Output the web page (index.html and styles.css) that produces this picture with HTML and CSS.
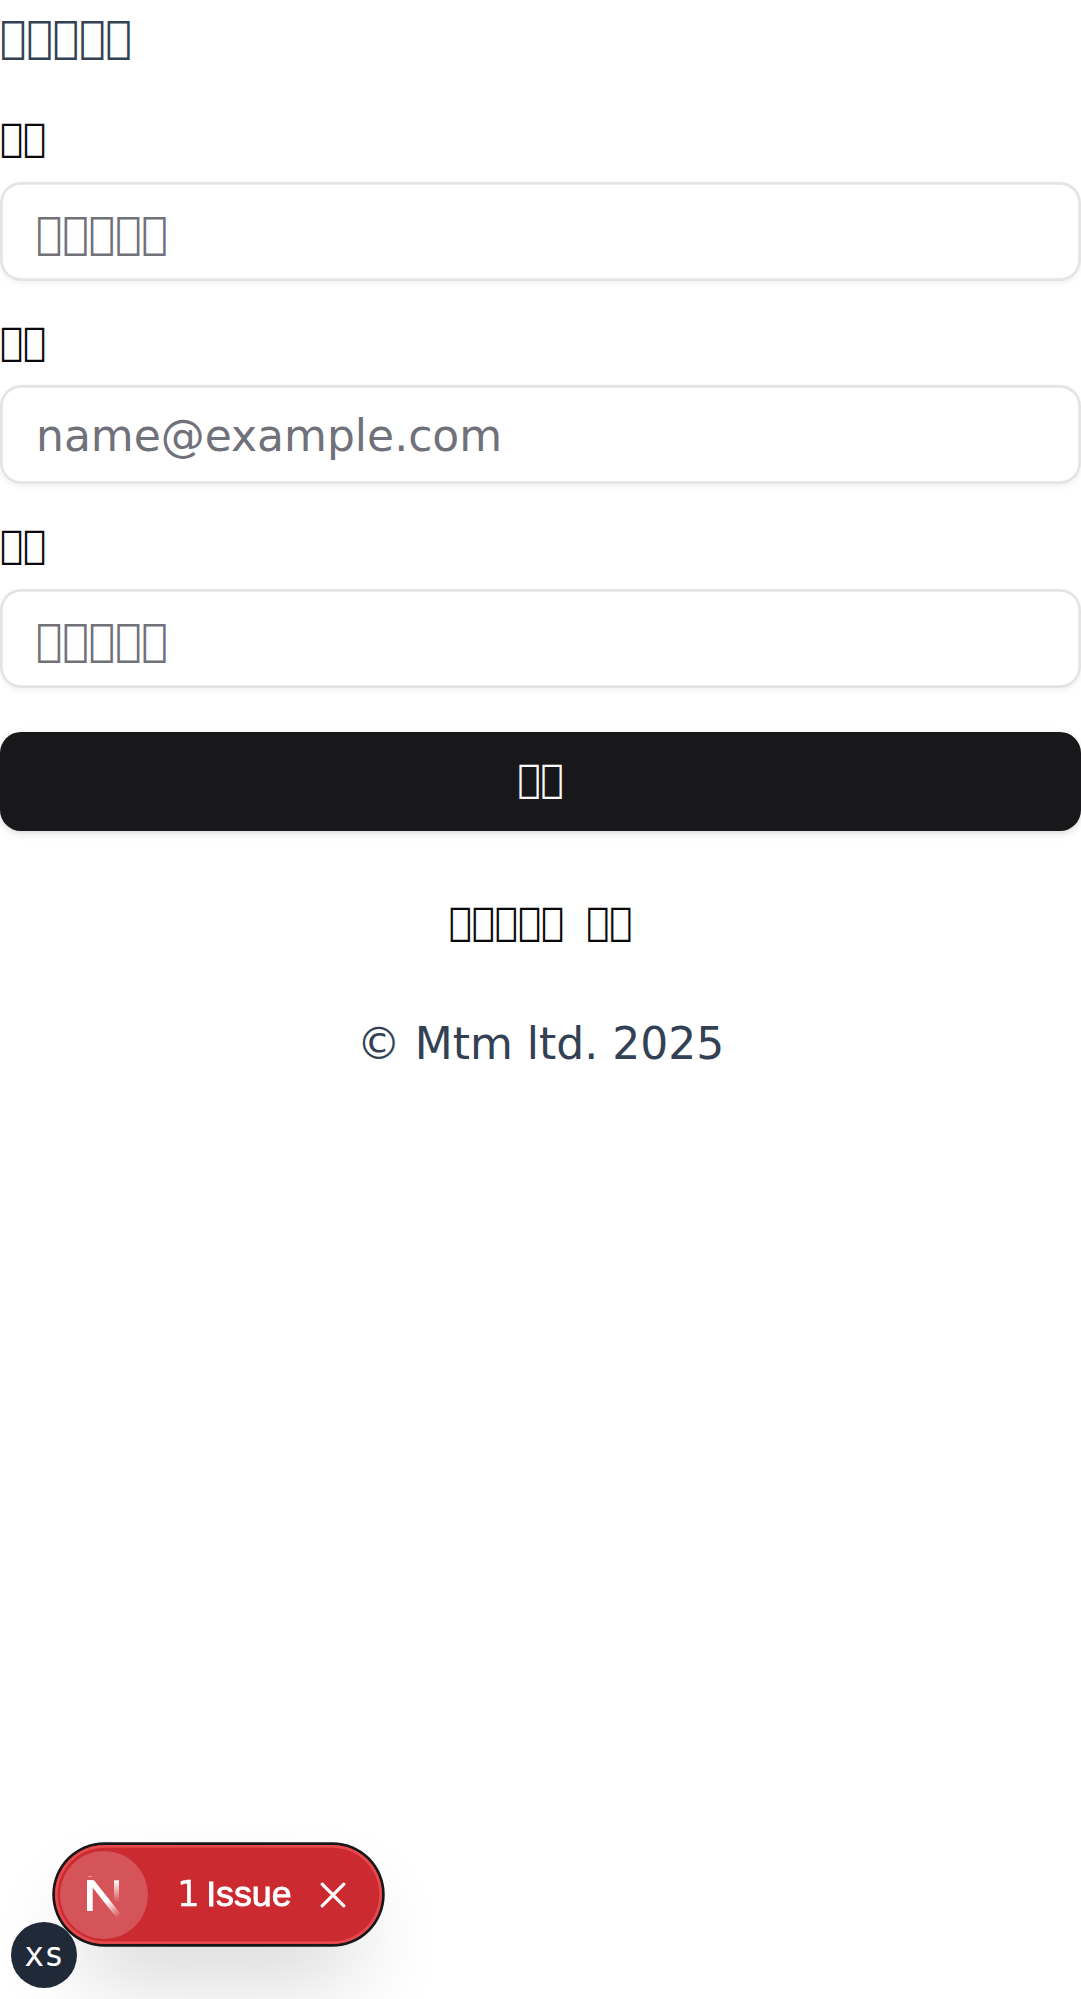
FILE: index.html
```html
<!DOCTYPE html>
<html lang="zh">
<head>
<meta charset="utf-8">
<title>Mtm</title>
<link rel="stylesheet" href="styles.css">
</head>
<body>
<main class="page">
  <p class="title">&#xEFF1;&#xEFF1;&#xEFF1;&#xEFF1;&#xEFF1;</p>
  <form class="form">
    <div class="field">
      <label class="label" for="name">&#xEFF1;&#xEFF1;</label>
      <input class="input" id="name" type="text" placeholder="&#xEFF1;&#xEFF1;&#xEFF1;&#xEFF1;&#xEFF1;">
    </div>
    <div class="field">
      <label class="label" for="email">&#xEFF1;&#xEFF1;</label>
      <input class="input" id="email" type="email" placeholder="name@example.com">
    </div>
    <div class="field">
      <label class="label" for="password">&#xEFF1;&#xEFF1;</label>
      <input class="input" id="password" type="password" placeholder="&#xEFF1;&#xEFF1;&#xEFF1;&#xEFF1;&#xEFF1;">
    </div>
    <button class="submit" type="button">&#xEFF1;&#xEFF1;</button>
  </form>
  <p class="login"><span>&#xEFF1;&#xEFF1;&#xEFF1;&#xEFF1;&#xEFF1;</span><a class="login-link">&#xEFF1;&#xEFF1;</a></p>
  <footer class="footer">© Mtm ltd. 2025</footer>
</main>
<div class="issues">
  <span class="issues-logo">
    <svg width="88" height="88" viewBox="0 0 88 88" fill="none">
      <defs>
        <linearGradient id="diag" x1="49" y1="49" x2="60" y2="65" gradientUnits="userSpaceOnUse"><stop stop-color="#fff"/><stop offset="1" stop-color="#fff" stop-opacity="0"/></linearGradient>
        <linearGradient id="stem" x1="56" y1="29" x2="56" y2="51" gradientUnits="userSpaceOnUse"><stop stop-color="#fff"/><stop offset="1" stop-color="#fff" stop-opacity="0"/></linearGradient>
      </defs>
      <path d="M28 25h4v1h-4z" fill="#fff" opacity=".35"/>
      <path d="M27 29.300h5.700V60H27z" fill="#fff"/>
      <path d="M27 29.300h7L61.500 64l-4.500 3.500z" fill="url(#diag)"/>
      <path d="M54 29.300h5v22h-5z" fill="url(#stem)"/>
    </svg>
  </span>
  <span class="issues-text"><span class="issues-count">1</span> Issue</span>
  <svg class="issues-close" width="26" height="26" viewBox="0 0 26 26" fill="none" stroke="#fff" stroke-width="3.200" stroke-linecap="round"><path d="M2.200 2.200l21.600 21.600M23.800 2.200L2.200 23.800"/></svg>
</div>
<div class="breakpoint">xs</div>
</body>
</html>
```

FILE: styles.css
```css
* { box-sizing: border-box; }
body {
  margin: 0;
  min-height: 1999px;
  background: #fff;
  color: #09090b;
  font: 44px/77px "DejaVu Sans", sans-serif;
}
.title { margin: 0 0 46px; line-height: 73px; padding-bottom: 2px; color: #334155; }
.form { display: flex; flex-direction: column; gap: 44px; }
.field { display: flex; flex-direction: column; gap: 22px; }
.label { padding-bottom: 4px; font-size: 38.5px; line-height: 34.5px; }
.input {
  width: 100%;
  height: 99px;
  margin: 0;
  padding: 13px 35px 11px 36px;
  border: 0;
  border-radius: 21px;
  background: transparent;
  box-shadow: inset 0 0 0 2.75px #e4e4e7, 0 2.75px 5.5px rgba(0, 0, 0, .05);
  font: 44px/66px "DejaVu Sans", sans-serif;
}
.input::placeholder { color: #71717a; opacity: 1; }
.submit {
  height: 99px;
  padding: 0 0 5px;
  border: 0;
  border-radius: 21px;
  background: #18181b;
  box-shadow: 0 2.75px 8.25px rgba(0, 0, 0, .1), 0 2.75px 5.5px -2.75px rgba(0, 0, 0, .1);
  color: #fafafa;
  font: 38.5px/55px "DejaVu Sans", sans-serif;
}
.login {
  display: flex;
  justify-content: center;
  gap: 22px;
  margin: 63.5px 0 55.5px;
  font-size: 38.5px;
  line-height: 55px;
}
.footer { text-align: center; color: #334155; }
.issues {
  position: fixed;
  left: 55px;
  bottom: 55px;
  display: flex;
  align-items: center;
  width: 327px;
  height: 99px;
  padding-left: 5px;
  border-radius: 50px;
  background: #ca2a30;
  color: #fff;
  box-shadow: 0 0 0 2.75px #171717, inset 0 0 0 2.75px #e5484d, 0 44px 88px -22px rgba(0, 0, 0, .24);
}
.issues-logo {
  width: 88px;
  height: 88px;
  border-radius: 50%;
  background: rgba(255, 255, 255, .2);
}
.issues-logo svg { display: block; }
.issues-text {
  width: 143px;
  margin: 0 0 1px 29px;
  white-space: nowrap;
  word-spacing: -3.5px;
  font: 35.75px/36px "Liberation Sans", sans-serif;
  -webkit-text-stroke: .9px #fff;
}
.issues-count {
  font-family: "DejaVu Sans", sans-serif;
  -webkit-text-stroke: .3px #fff;
}
.breakpoint {
  position: fixed;
  left: 11px;
  bottom: 11px;
  display: flex;
  align-items: center;
  justify-content: center;
  width: 66px;
  height: 66px;
  border-radius: 50%;
  background: #1f2937;
  color: #fff;
  font: 33px/44px "DejaVu Sans Mono", monospace;
}
```
